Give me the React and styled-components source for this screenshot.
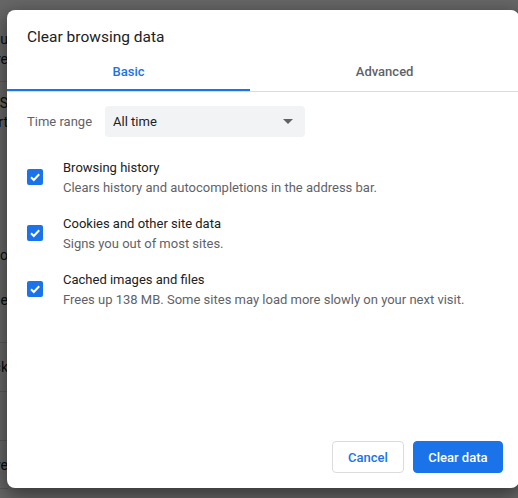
import styled, { createGlobalStyle } from "styled-components";

const GlobalStyle = createGlobalStyle`
  html, body {
    margin: 0;
    padding: 0;
    width: 518px;
    height: 498px;
    overflow: hidden;
    font-family: Roboto, "Liberation Sans", Arial, sans-serif;
  }
`;

const Screen = styled.div`
  position: relative;
  width: 518px;
  height: 498px;
  overflow: hidden;
  background: #fff;
`;

// settings page sitting behind the modal
const Page = styled.div`
  display: flex;
  flex-direction: column;
  margin-left: -232px;
  width: 240px;
  padding-top: 29px;
`;

const PageRow = styled.div`
  height: ${(p) => p.h}px;
  flex-shrink: 0;
  box-sizing: content-box;
  display: flex;
  align-items: center;
  justify-content: flex-end;
  font-size: 14px;
  color: #202124;
  border-bottom: ${(p) => (p.line ? "1px solid #dadce0" : "none")};
`;

const Scrim = styled.div`
  position: absolute;
  inset: 0;
  background: rgba(0, 0, 0, 0.6);
`;

const Dialog = styled.div`
  position: absolute;
  left: 7px;
  top: 10px;
  width: 512px;
  height: 478px;
  background: #fff;
  border-radius: 8px;
  box-shadow: 0 4px 18px rgba(0, 0, 0, 0.35), 0 10px 20px rgba(0, 0, 0, 0.2);
  display: flex;
  flex-direction: column;
  box-sizing: border-box;
`;

const Title = styled.h2`
  margin: 0;
  padding: 17px 20px 0;
  font-size: 15.5px;
  line-height: 20px;
  font-weight: 400;
  color: #202124;
`;

const Tabs = styled.div`
  display: flex;
  margin-top: 5px;
  border-bottom: 1px solid #dadce0;
`;

const Tab = styled.div`
  flex: 1 1 auto;
  height: 39px;
  padding-top: 1px;
  box-sizing: border-box;
  display: flex;
  align-items: center;
  justify-content: center;
  font-size: 13px;
  font-weight: 500;
  color: ${(p) => (p.active ? "#1a73e8" : "#5f6368")};
  border-bottom: 2px solid ${(p) => (p.active ? "#1a73e8" : "transparent")};
`;

const Body = styled.div`
  flex: 1;
  padding: 14px 20px 0;
`;

const RangeRow = styled.div`
  display: flex;
  align-items: center;
  gap: 13px;
`;

const RangeLabel = styled.span`
  font-size: 13px;
  color: #5f6368;
`;

const Select = styled.div`
  width: 200px;
  height: 31px;
  box-sizing: border-box;
  padding: 0 8px;
  display: flex;
  align-items: center;
  justify-content: space-between;
  background: #f1f3f4;
  border-radius: 4px;
  font-size: 13px;
  color: #202124;
`;

const Arrow = styled.span`
  width: 0;
  height: 0;
  margin-right: 4px;
  border-left: 5px solid transparent;
  border-right: 5px solid transparent;
  border-top: 5px solid #5f6368;
`;

const Options = styled.div`
  display: flex;
  flex-direction: column;
  margin-top: 13px;
`;

const Option = styled.div`
  display: flex;
  align-items: center;
  gap: 20px;
  padding: 8px 0;
`;

const Box = styled.span`
  width: 16px;
  height: 16px;
  margin-top: -2px;
  border-radius: 2px;
  background: #1a73e8;
  display: flex;
  align-items: center;
  justify-content: center;
  flex-shrink: 0;
`;

const Texts = styled.div`
  display: flex;
  flex-direction: column;
  font-size: 13px;
  line-height: 20px;
`;

const Label = styled.span`
  color: #202124;
`;

const Sub = styled.span`
  color: #5f6368;
`;

const Footer = styled.div`
  display: flex;
  justify-content: flex-end;
  gap: 9px;
  padding: 0 16px 15px;
`;

const Button = styled.button`
  height: 32px;
  box-sizing: border-box;
  padding: 0 ${(p) => (p.primary ? 14.5 : 15)}px;
  border-radius: 4px;
  border: 1px solid ${(p) => (p.primary ? "#1a73e8" : "#dadce0")};
  background: ${(p) => (p.primary ? "#1a73e8" : "#fff")};
  color: ${(p) => (p.primary ? "#fff" : "#1a73e8")};
  font-family: inherit;
  font-size: 13px;
  font-weight: 500;
  cursor: pointer;
`;

const Check = () => (
  <svg width="12" height="12" viewBox="0 0 12 12">
    <path d="M2 6.2 L4.8 9 L10.2 3.2" fill="none" stroke="#fff" strokeWidth="2" />
  </svg>
);

const behind = [
  { t: "You", h: 20 },
  { t: "Sync and more", h: 20 },
  { t: "", h: 12, line: true },
  { t: "", h: 11 },
  { t: "Safety: S", h: 20 },
  { t: "Use and sort", h: 18 },
  { t: "", h: 114 },
  { t: "Notificatio", h: 20 },
  { t: "", h: 25 },
  { t: "Theme", h: 20 },
  { t: "", h: 32, line: true },
  { t: "Cookies: Block", h: 48, line: true },
  { t: "", h: 48, line: true },
  { t: "Site data: Remove", h: 47, line: true },
];

const items = [
  { label: "Browsing history", sub: "Clears history and autocompletions in the address bar." },
  { label: "Cookies and other site data", sub: "Signs you out of most sites." },
  {
    label: "Cached images and files",
    sub: "Frees up 138 MB. Some sites may load more slowly on your next visit.",
  },
];

export default function App() {
  return (
    <Screen>
      <GlobalStyle />
      <Page>
        {behind.map((r, i) => (
          <PageRow key={i} h={r.h} line={r.line}>
            {r.t}
          </PageRow>
        ))}
      </Page>
      <Scrim />
      <Dialog>
        <Title>Clear browsing data</Title>
        <Tabs>
          <Tab active>Basic</Tab>
          <Tab>Advanced</Tab>
        </Tabs>
        <Body>
          <RangeRow>
            <RangeLabel>Time range</RangeLabel>
            <Select>
              All time
              <Arrow />
            </Select>
          </RangeRow>
          <Options>
            {items.map((it) => (
              <Option key={it.label}>
                <Box>
                  <Check />
                </Box>
                <Texts>
                  <Label>{it.label}</Label>
                  <Sub>{it.sub}</Sub>
                </Texts>
              </Option>
            ))}
          </Options>
        </Body>
        <Footer>
          <Button>Cancel</Button>
          <Button primary>Clear data</Button>
        </Footer>
      </Dialog>
    </Screen>
  );
}
